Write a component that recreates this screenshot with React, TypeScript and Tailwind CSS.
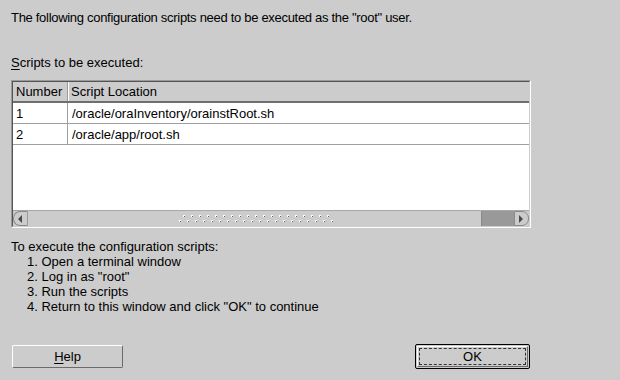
// Oracle installer: "Execute Configuration scripts" dialog

const rows = [
  { num: '1', path: '/oracle/oraInventory/orainstRoot.sh' },
  { num: '2', path: '/oracle/app/root.sh' },
];

const steps = [
  'Open a terminal window',
  'Log in as "root"',
  'Run the scripts',
  'Return to this window and click "OK" to continue',
];

function Grip() {
  const dots = [];
  for (let i = 0; i < 20; i++) {
    dots.push(
      <g key={'t' + i}>
        <rect x={4 + i * 8} y={0} width={2} height={1} fill="#ffffff" />
        <rect x={4 + i * 8} y={1} width={1} height={1} fill="#ffffff" />
        <rect x={5 + i * 8} y={1} width={1} height={1} fill="#666666" />
      </g>,
    );
    dots.push(
      <g key={'b' + i}>
        <rect x={i * 8} y={5} width={2} height={1} fill="#ffffff" />
        <rect x={i * 8} y={6} width={1} height={1} fill="#ffffff" />
        <rect x={1 + i * 8} y={6} width={1} height={1} fill="#666666" />
      </g>,
    );
  }
  return (
    <svg width="156" height="8" viewBox="0 0 156 8">
      {dots}
    </svg>
  );
}

function ArrowButton({ dir }: { dir: 'left' | 'right' }) {
  const left = dir === 'left';
  return (
    <div
      className={
        'w-[15px] h-full flex items-center justify-center bg-[#cccccc] border border-[#8a8a8a] ' +
        (left ? 'rounded-l-[7px] border-r-[#9a9a9a]' : 'rounded-r-[7px]')
      }
    >
      <svg width="5" height="8" viewBox="0 0 5 8">
        {left ? <path d="M4 0 L0 4 L4 8 Z" fill="#4a4a4a" /> : <path d="M0 0 L4 4 L0 8 Z" fill="#4a4a4a" />}
      </svg>
    </div>
  );
}

export default function App() {
  return (
    <div
      className="w-[620px] h-[380px] bg-[#cccccc] text-[13px] leading-[15px] text-black overflow-hidden"
      style={{ fontFamily: '"Liberation Sans", Arial, sans-serif' }}
    >
      <div className="pt-[10px] pl-[11px] tracking-[-0.3px]">
        The following configuration scripts need to be executed as the "root" user.
      </div>
      <div className="mt-[30px] pl-[11px]">
        <span className="underline underline-offset-2">S</span>cripts to be executed:
      </div>

      {/* tableau + barre de défilement */}
      <div className="mt-[10px] ml-[11px] w-[520px] h-[148px] border border-t-[#9a9a9a] border-l-[#9a9a9a] border-b-white border-r-white">
        <div className="h-full flex flex-col border border-t-[#555555] border-l-[#555555] border-b-[#cccccc] border-r-[#cccccc] bg-white">
          <div className="flex h-[21px] bg-[#cccccc] border-b-2 border-[#6e6e6e]">
            <div className="w-[55px] pl-[3px] flex items-center border-r border-[#9a9a9a]">Number</div>
            <div className="flex-1 pl-[2px] flex items-center border-l border-white">Script Location</div>
          </div>
          {rows.map((r) => (
            <div key={r.num} className="flex h-[21px] border-b border-[#a0a0a0]">
              <div className="w-[55px] pl-[3px] flex items-center border-r border-[#a0a0a0]">{r.num}</div>
              <div className="flex-1 pl-[4px] flex items-center">{r.path}</div>
            </div>
          ))}
          <div className="flex-1" />
          <div className="flex h-[16px] bg-[#cccccc] border-t border-[#a8a8a8]">
            <ArrowButton dir="left" />
            <div className="flex-1 flex items-center justify-center border-r border-[#8a8a8a] pl-[4px]">
              <Grip />
            </div>
            <div className="w-[32px] bg-[#999999]" />
            <ArrowButton dir="right" />
          </div>
        </div>
      </div>

      <div className="mt-[11px] pl-[11px]">To execute the configuration scripts:</div>
      <ol className="pl-[27px]">
        {steps.map((s, i) => (
          <li key={i}>
            {i + 1}. {s}
          </li>
        ))}
      </ol>

      <div className="mt-[30px] ml-[12px] w-[518px] h-[25px] flex items-center justify-between">
        <button className="w-[111px] h-[23px] bg-[#cccccc] border border-t-white border-l-white border-b-[#6a6a6a] border-r-[#6a6a6a] rounded-[2px]">
          <span className="underline underline-offset-2">H</span>elp
        </button>
        <button className="w-[115px] h-[25px] bg-[#cccccc] border border-black rounded-[2px] p-px">
          <div className="h-full border border-t-white border-l-white border-b-[#6a6a6a] border-r-[#6a6a6a] p-px">
            <div className="h-full flex items-center justify-center border border-dashed border-[#333333]">OK</div>
          </div>
        </button>
      </div>
    </div>
  );
}
